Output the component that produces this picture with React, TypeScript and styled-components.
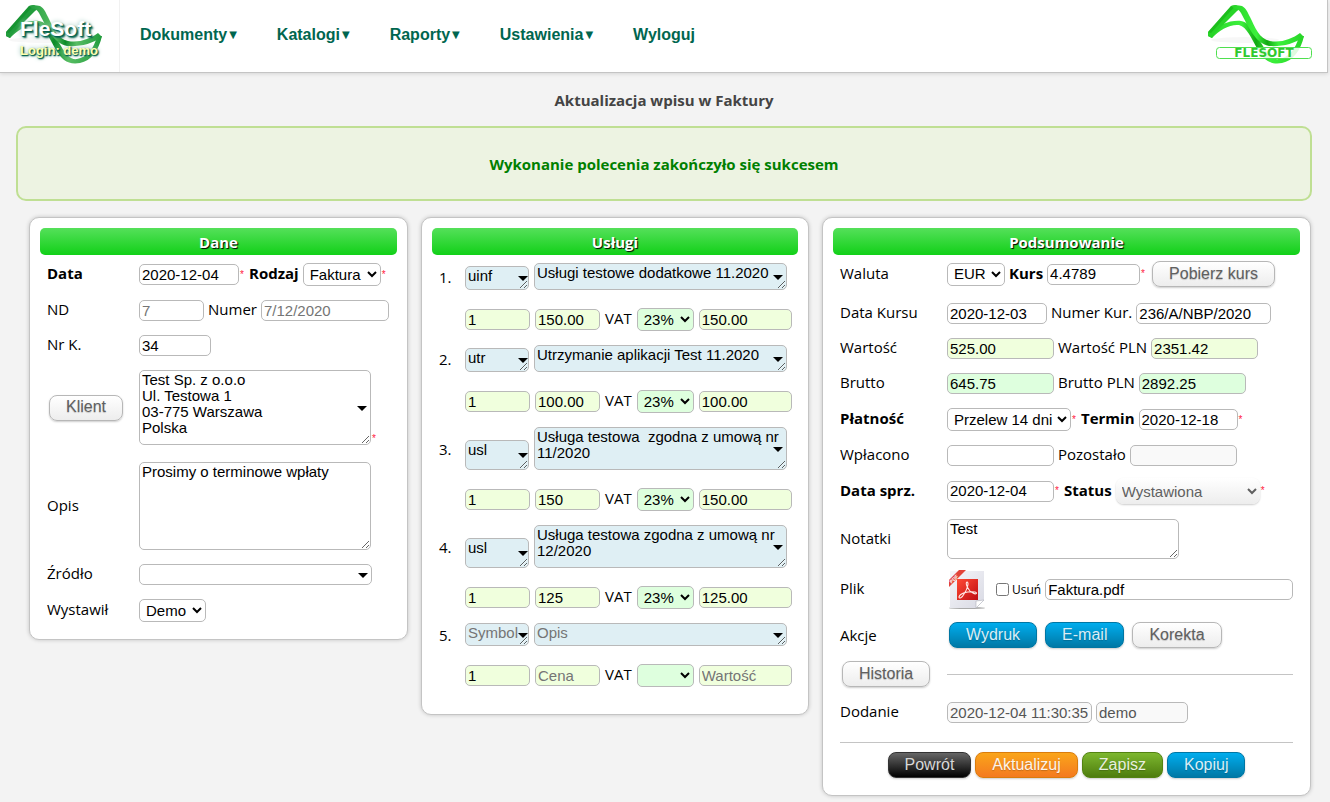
import React from "react";
import styled, { createGlobalStyle, css } from "styled-components";

const GlobalStyle = createGlobalStyle`
  * { box-sizing: border-box; }
  body {
    margin: 0;
    background: #f3f3f3;
    color: #000;
    font: 15px/20px "Open Sans", "Noto Sans", sans-serif;
  }
`;

const controlFont = `"Liberation Sans", Arial, sans-serif`;

const Page = styled.div`
  padding: 0 2px 6px 0;
`;

const Header = styled.header`
  display: flex;
  align-items: stretch;
  height: 73px;
  background: #fff;
  border-right: 1px solid #c4c4c4;
  border-bottom: 1px solid #c4c4c4;
  box-shadow: 0 1px 4px rgba(0, 0, 0, 0.12);
`;

const Account = styled.a`
  position: relative;
  display: block;
  width: 120px;
  padding: 19px 0 0 20px;
  border-right: 1px solid #f1f1f1;
  text-decoration: none;
  font-family: ${controlFont};
  font-weight: bold;
  svg {
    position: absolute;
    left: 4px;
    top: 3px;
  }
`;

const Brand = styled.span`
  position: relative;
  display: block;
  font-size: 21px;
  line-height: 20px;
  color: #fff;
  text-shadow: 1px 1px 1px #00604c, 2px 2px 2px #00604c, 0 0 5px #9fc9bf;
`;

const Login = styled.span`
  position: relative;
  display: block;
  margin-top: 4px;
  font-size: 13px;
  line-height: 16px;
  color: #ffffb0;
  text-shadow: 1px 1px 1px #00604c, 1px 1px 2px #00604c, 0 0 5px #8fc0b4;
`;

const Nav = styled.nav`
  display: flex;
  flex: 1;
  align-items: center;
  padding-bottom: 2px;
`;

const NavLink = styled.a`
  display: flex;
  align-items: center;
  gap: 2px;
  padding: 0 20px;
  color: #00664f;
  font: bold 16px/20px ${controlFont};
  text-decoration: none;
  small {
    font: 10px/20px "DejaVu Sans", sans-serif;
  }
`;

const Logo = styled.a`
  padding: 3px 13px 0 0;
`;

const Title = styled.h1`
  margin: 17px 0 16px;
  color: #444;
  font-size: 15px;
  line-height: 20px;
  text-align: center;
`;

const Notice = styled.p`
  margin: 0 16px;
  padding: 26px 0 25px;
  border: 2px solid #bfdf93;
  border-radius: 10px;
  background: #edf3e2;
  color: #008000;
  font-size: 15px;
  line-height: 20px;
  font-weight: bold;
  text-align: center;
`;

const Panels = styled.main`
  display: grid;
  grid-template-columns: minmax(0, 379fr) minmax(0, 388fr) minmax(0, 489fr);
  align-items: start;
  gap: 13px;
  padding: 16px 17px 0 29px;
`;

const Panel = styled.section<{ $bottom?: number }>`
  padding: 10px 10px ${(p) => p.$bottom ?? 10}px;
  border: 1px solid #c4c4c4;
  border-radius: 10px;
  background: #fff;
  box-shadow: 0 0 4px rgba(0, 0, 0, 0.2);
`;

const PanelTitle = styled.h2`
  margin: 0 0 1px;
  border-radius: 5px;
  background: linear-gradient(#55e05a, #11d018);
  color: #fff;
  font-size: 15px;
  line-height: 27px;
  text-align: center;
  text-shadow: 1px 1px 1px #000;
  padding-top: 1px;
  height: 27px;
`;

const Row = styled.div<{ $label: number; $buttons?: boolean; $top?: number; $bottom?: number }>`
  display: grid;
  grid-template-columns: ${(p) => p.$label}px 1fr;
  align-items: center;
  padding: ${(p) => p.$top ?? (p.$buttons ? 5 : 7)}px 7px ${(p) => p.$bottom ?? (p.$buttons ? 8 : 7)}px;
`;

const Fields = styled.div`
  display: flex;
  align-items: center;
  gap: 4px;
`;

const Label = styled.label<{ $bold?: boolean }>`
  padding-bottom: 2px;
  line-height: 19px;
  font-weight: ${(p) => (p.$bold ? "bold" : "normal")};
  white-space: nowrap;
`;

const Required = styled.span`
  display: flex;
  align-items: center;
  &::after {
    content: "*";
    width: 5px;
    padding-left: 1px;
    color: #ff2040;
    font: 10px/12px ${controlFont};
  }
`;

const RequiredArea = styled(Required)`
  align-items: flex-end;
`;

type Tone = "white" | "lime" | "mint" | "sky" | "muted";
const tones: Record<Tone, string> = {
  white: "#fff",
  lime: "#f0ffdd",
  mint: "#deffde",
  sky: "#dfeff4",
  muted: "#f9f9f9",
};

const control = css<{ $w?: number; $tone?: Tone }>`
  margin: 0;
  width: ${(p) => (p.$w ? `${p.$w}px` : "auto")};
  border: 1px solid #b9b9b9;
  border-radius: 5px;
  background-color: ${(p) => tones[p.$tone ?? "white"]};
  color: ${(p) => (p.$tone === "muted" ? "#555" : "#000")};
  font: 15px/16px ${controlFont};
  &::placeholder { color: #757575; }
`;

const Input = styled.input<{ $w?: number; $tone?: Tone; $grow?: boolean }>`
  ${control}
  height: 21px;
  padding: 0 2px 1px;
  ${(p) => p.$grow && "flex: 1; min-width: 0;"}
`;

const Select = styled.select<{ $w?: number; $tone?: Tone }>`
  ${control}
  height: 23px;
  padding: 0 0 1px 2px;
`;

const StatusSelect = styled.select`
  width: 144px;
  height: 26px;
  padding: 0 2px;
  border: 0;
  border-radius: 8px;
  background: linear-gradient(#fff, #ededed);
  box-shadow: 0 1px 2px rgba(0, 0, 0, 0.2);
  color: #606060;
  font: 15px/16px ${controlFont};
`;

const TextArea = styled.textarea<{ $w?: number; $h: number; $tone?: Tone }>`
  ${control}
  display: block;
  height: ${(p) => p.$h}px;
  padding: 1px 2px;
  overflow: hidden;
  resize: both;
`;

const Combo = styled.span<{ $right?: number }>`
  position: relative;
  display: block;
  ${Input} { display: block; }
  &::after {
    content: "";
    position: absolute;
    right: ${(p) => p.$right ?? 4}px;
    top: 50%;
    margin-top: -2px;
    border: 5px solid transparent;
    border-top-color: #000;
    border-bottom: 0;
    pointer-events: none;
  }
`;

type Look = "light" | "blue" | "black" | "orange" | "green";
const looks: Record<Look, [string, string, string, string]> = {
  light: ["#ffffff", "#ededed", "#b7b7b7", "#606060"],
  blue: ["#00adee", "#0078a5", "#0076a3", "#d9eef7"],
  black: ["#666666", "#000000", "#333333", "#d7d7d7"],
  orange: ["#faa51a", "#f47a20", "#da7c0c", "#fef4e9"],
  green: ["#7db72f", "#4e7d0e", "#538312", "#e8f0de"],
};

const Button = styled.button<{ $look?: Look }>`
  height: 26px;
  margin: 0 2px;
  padding: 0 16px 1px;
  border: 1px solid ${(p) => looks[p.$look ?? "light"][2]};
  border-radius: 8px;
  background: linear-gradient(${(p) => looks[p.$look ?? "light"][0]}, ${(p) => looks[p.$look ?? "light"][1]});
  box-shadow: 0 1px 2px rgba(0, 0, 0, 0.2);
  color: ${(p) => looks[p.$look ?? "light"][3]};
  font: 16px/20px ${controlFont};
  text-shadow: 0 1px 1px rgba(0, 0, 0, 0.2);
  white-space: nowrap;
  justify-self: start;
`;

const Rule = styled.hr`
  width: 100%;
  margin: 0;
  border: 0;
  border-top: 1px solid #c4c4c4;
`;

const Footer = styled.div`
  display: flex;
  justify-content: center;
  margin: 12px 7px 0;
  padding-top: 9px;
  border-top: 1px solid #c4c4c4;
`;

const ServiceList = styled.ol`
  margin: 0;
  padding: 0;
  list-style: none;
`;

const ServiceHead = styled.div`
  display: grid;
  grid-template-columns: 26px auto auto;
  justify-content: start;
  align-items: end;
  column-gap: 5px;
  padding: 7px 0 11px 7px;
  > span:first-child { align-self: center; }
  > span:nth-child(2) { margin-left: -5px; }
`;

const ServiceBody = styled.div`
  display: flex;
  align-items: center;
  gap: 5px;
  padding: 7px 0 7px 33px;
`;

const FileLink = styled.a`
  display: block;
  width: 39px;
  height: 39px;
  margin-right: 6px;
`;

const Check = styled.label`
  display: flex;
  align-items: center;
  gap: 3px;
  font-size: 12px;
  input {
    width: 13px;
    height: 13px;
    margin: 0;
  }
`;

function Ribbon({ dark, mid, light, children, width }: {
  dark: string; mid: string; light: string; children?: React.ReactNode; width: number;
}) {
  const id = "ribbon" + light.slice(1);
  return (
    <svg width={width} height="66" viewBox={`6 3 ${width} 66`} fill="none" aria-hidden="true">
      <defs>
        <linearGradient id={id} x1="0" x2="1" y1="0" y2="0">
          <stop offset="0" stopColor={mid} />
          <stop offset="0.35" stopColor={light} />
          <stop offset="0.5" stopColor={dark} />
          <stop offset="0.65" stopColor={light} />
          <stop offset="1" stopColor={mid} />
        </linearGradient>
      </defs>
      <ellipse cx="45" cy="40" rx="34" ry="3" fill="#000" opacity="0.03" />
      <path d="M9 33C18 25 30 20 41 21C52 23 57 36 63 46C68 55 73 60 79 59C89 57 96 49 99 36L104 36C101 50 93 61 82 63C70 65 64 60 58 50C51 38 47 27 39 25C30 24 19 30 12 38L8 36Z" fill={`url(#${id})`} />
      <path d="M8 32L31 6L36 5L41 8L37 11L14 34L12 38L8 36Z" fill={mid} />
      <path d="M8 32L31 6L36 5L11 33Z" fill={dark} opacity="0.5" />
      <path d="M31 6C34 5 38 5 42 6C46 8 48 13 50 17C55 27 59 39 70 41C81 43 92 39 100 33L104 37C94 44 81 47 69 46C55 43 48 26 41 13C39 10 37 8 35 9Z" fill={`url(#${id})`} />
      {children}
    </svg>
  );
}

function PdfIcon() {
  return (
    <svg width="39" height="39" viewBox="0 0 39 39" aria-hidden="true">
      <defs>
        <linearGradient id="paper" x1="0" y1="0" x2="1" y2="1">
          <stop offset="0" stopColor="#f6f6fa" />
          <stop offset="1" stopColor="#d8d9e3" />
        </linearGradient>
        <linearGradient id="tile" x1="0" y1="0" x2="1" y2="1">
          <stop offset="0" stopColor="#ff4b35" />
          <stop offset="1" stopColor="#bf0d12" />
        </linearGradient>
      </defs>
      <ellipse cx="20" cy="38" rx="18" ry="1" fill="#aaa" />
      <path d="M3 1H37V30L29 38H3Z" fill="url(#paper)" />
      <path d="M29 38V31L37 30Z" fill="#fff" stroke="#aeb0bb" strokeWidth="0.6" />
      <rect x="10" y="9" width="21" height="21" fill="url(#tile)" />
      <path d="M12 27C13 23 21 21 28 22C31 23 29 25 26 23C21 21 18 13 20 12C22 12 21 18 17 24C15 28 12 29 12 27Z" fill="none" stroke="#ffe9e5" strokeWidth="1.1" />
      <path d="M2 10L12 0H19L2 17Z" fill="#e2433a" />
      <text x="3" y="12" transform="rotate(-43 6 11)" fill="#fff" fontSize="5" fontWeight="bold" fontFamily="Liberation Sans, sans-serif">PDF</text>
    </svg>
  );
}

const menu = ["Dokumenty", "Katalogi", "Raporty", "Ustawienia"];

const services = [
  { symbol: "uinf", text: "Usługi testowe dodatkowe 11.2020", price: "150.00", value: "150.00", symbolH: 24, textH: 27 },
  { symbol: "utr", text: "Utrzymanie aplikacji Test 11.2020", price: "100.00", value: "100.00", symbolH: 24, textH: 27 },
  { symbol: "usl", text: "Usługa testowa  zgodna z umową nr 11/2020", price: "150", value: "150.00", symbolH: 30, textH: 43 },
  { symbol: "usl", text: "Usługa testowa zgodna z umową nr 12/2020", price: "125", value: "125.00", symbolH: 30, textH: 43 },
  { symbol: "", text: "", price: "", value: "", symbolH: 23, textH: 23 },
];

function Service({ item, no }: { item: (typeof services)[number]; no: number }) {
  return (
    <li>
      <ServiceHead>
        <span>{no}.</span>
        <Combo $right={1}>
          <TextArea aria-label="Symbol" placeholder="Symbol" defaultValue={item.symbol} $w={64} $h={item.symbolH} $tone="sky" />
        </Combo>
        <Combo>
          <TextArea aria-label="Opis usługi" placeholder="Opis" defaultValue={item.text} $w={253} $h={item.textH} $tone="sky" />
        </Combo>
      </ServiceHead>
      <ServiceBody>
        <Input aria-label="Ilość" defaultValue="1" $w={65} $tone="lime" />
        <Input aria-label="Cena" placeholder="Cena" defaultValue={item.price} $w={65} $tone="lime" />
        <Label htmlFor={`vat${no}`}>VAT</Label>
        <Select id={`vat${no}`} $w={57} $tone="mint">
          <option>{item.price ? "23%" : ""}</option>
        </Select>
        <Input aria-label="Wartość usługi" placeholder="Wartość" defaultValue={item.value} $w={93} $tone="lime" />
      </ServiceBody>
    </li>
  );
}

export default function App() {
  return (
    <Page>
      <GlobalStyle />
      <Header>
        <Account href="#">
          <Ribbon width={100} dark="#0b8a26" mid="#219c3c" light="#57bd63" />
          <Brand>FleSoft</Brand>
          <Login>Login: demo</Login>
        </Account>
        <Nav>
          {menu.map((name) => (
            <NavLink href="#" key={name}>
              {name}
              <small>▼</small>
            </NavLink>
          ))}
          <NavLink href="#">Wyloguj</NavLink>
        </Nav>
        <Logo href="#" aria-label="FleSoft">
          <Ribbon width={108} dark="#12a812" mid="#27d427" light="#3cf03c">
            <rect x="16.5" y="47.5" width="95" height="11" rx="3" fill="#fff" fillOpacity="0.85" stroke="#4fe04f" />
            <text x="64" y="57" textAnchor="middle" fill="#2fc92f" fontSize="12" fontWeight="bold" fontFamily="DejaVu Sans, sans-serif">FLESOFT</text>
          </Ribbon>
        </Logo>
      </Header>

      <Title>Aktualizacja wpisu w Faktury</Title>
      <Notice role="status">Wykonanie polecenia zakończyło się sukcesem</Notice>

      <Panels>
        <Panel>
          <PanelTitle>Dane</PanelTitle>
          <Row $label={92}>
            <Label $bold htmlFor="data">Data</Label>
            <Fields>
              <Required><Input id="data" defaultValue="2020-12-04" $w={100} /></Required>
              <Label $bold htmlFor="rodzaj">Rodzaj</Label>
              <Required><Select id="rodzaj" $w={78}><option>Faktura</option></Select></Required>
            </Fields>
          </Row>
          <Row $label={92}>
            <Label htmlFor="nd">ND</Label>
            <Fields>
              <Input id="nd" placeholder="7" $w={65} />
              <Label htmlFor="numer">Numer</Label>
              <Input id="numer" placeholder="7/12/2020" $w={128} />
            </Fields>
          </Row>
          <Row $label={92}>
            <Label htmlFor="nrk">Nr K.</Label>
            <Fields><Input id="nrk" defaultValue="34" $w={72} /></Fields>
          </Row>
          <Row $label={92} $bottom={10}>
            <Button type="button">Klient</Button>
            <Fields>
              <RequiredArea>
                <Combo>
                  <TextArea aria-label="Klient" defaultValue={"Test Sp. z o.o.o\nUl. Testowa 1\n03-775 Warszawa\nPolska"} $w={232} $h={75} />
                </Combo>
              </RequiredArea>
            </Fields>
          </Row>
          <Row $label={92}>
            <Label htmlFor="opis">Opis</Label>
            <TextArea id="opis" defaultValue="Prosimy o terminowe wpłaty" $w={232} $h={88} />
          </Row>
          <Row $label={92}>
            <Label htmlFor="zrodlo">Źródło</Label>
            <Fields><Combo><Input id="zrodlo" $w={233} /></Combo></Fields>
          </Row>
          <Row $label={92}>
            <Label htmlFor="wystawil">Wystawił</Label>
            <Fields><Select id="wystawil" $w={67}><option>Demo</option></Select></Fields>
          </Row>
        </Panel>

        <Panel $bottom={20}>
          <PanelTitle>Usługi</PanelTitle>
          <ServiceList>
            {services.map((item, i) => <Service key={i} item={item} no={i + 1} />)}
          </ServiceList>
        </Panel>

        <Panel $bottom={17}>
          <PanelTitle>Podsumowanie</PanelTitle>
          <Row $label={107} $buttons $bottom={9}>
            <Label htmlFor="waluta">Waluta</Label>
            <Fields>
              <Select id="waluta" $w={58}><option>EUR</option></Select>
              <Label $bold htmlFor="kurs">Kurs</Label>
              <Required><Input id="kurs" defaultValue="4.4789" $w={93} /></Required>
              <Button type="button">Pobierz kurs</Button>
            </Fields>
          </Row>
          <Row $label={107}>
            <Label htmlFor="datakursu">Data Kursu</Label>
            <Fields>
              <Input id="datakursu" defaultValue="2020-12-03" $w={100} />
              <Label htmlFor="numerkur">Numer Kur.</Label>
              <Input id="numerkur" defaultValue="236/A/NBP/2020" $w={135} />
            </Fields>
          </Row>
          <Row $label={107}>
            <Label htmlFor="wartosc">Wartość</Label>
            <Fields>
              <Input id="wartosc" defaultValue="525.00" $w={107} $tone="lime" />
              <Label htmlFor="wartoscpln">Wartość PLN</Label>
              <Input id="wartoscpln" defaultValue="2351.42" $w={107} $tone="lime" />
            </Fields>
          </Row>
          <Row $label={107}>
            <Label htmlFor="brutto">Brutto</Label>
            <Fields>
              <Input id="brutto" defaultValue="645.75" $w={107} $tone="mint" />
              <Label htmlFor="bruttopln">Brutto PLN</Label>
              <Input id="bruttopln" defaultValue="2892.25" $w={107} $tone="mint" />
            </Fields>
          </Row>
          <Row $label={107}>
            <Label $bold htmlFor="platnosc">Płatność</Label>
            <Fields>
              <Required><Select id="platnosc" $w={124}><option>Przelew 14 dni</option></Select></Required>
              <Label $bold htmlFor="termin">Termin</Label>
              <Required><Input id="termin" defaultValue="2020-12-18" $w={99} /></Required>
            </Fields>
          </Row>
          <Row $label={107}>
            <Label htmlFor="wplacono">Wpłacono</Label>
            <Fields>
              <Input id="wplacono" $w={107} />
              <Label htmlFor="pozostalo">Pozostało</Label>
              <Input id="pozostalo" readOnly $w={107} $tone="muted" />
            </Fields>
          </Row>
          <Row $label={107} $buttons>
            <Label $bold htmlFor="datasprz">Data sprz.</Label>
            <Fields>
              <Required><Input id="datasprz" defaultValue="2020-12-04" $w={107} /></Required>
              <Label $bold htmlFor="status">Status</Label>
              <Required><StatusSelect id="status"><option>Wystawiona</option></StatusSelect></Required>
            </Fields>
          </Row>
          <Row $label={107}>
            <Label htmlFor="notatki">Notatki</Label>
            <TextArea id="notatki" defaultValue="Test" $w={232} $h={40} />
          </Row>
          <Row $label={107} $top={4} $bottom={8}>
            <Label htmlFor="plik">Plik</Label>
            <Fields>
              <FileLink href="#" aria-label="Faktura.pdf"><PdfIcon /></FileLink>
              <Check><input type="checkbox" />Usuń</Check>
              <Input id="plik" defaultValue="Faktura.pdf" $grow />
            </Fields>
          </Row>
          <Row $label={107} $buttons>
            <span>Akcje</span>
            <Fields>
              <Button type="button" $look="blue">Wydruk</Button>
              <Button type="button" $look="blue">E-mail</Button>
              <Button type="button">Korekta</Button>
            </Fields>
          </Row>
          <Row $label={107} $buttons>
            <Button type="button">Historia</Button>
            <Rule />
          </Row>
          <Row $label={107}>
            <Label htmlFor="dodanie">Dodanie</Label>
            <Fields>
              <Input id="dodanie" readOnly defaultValue="2020-12-04 11:30:35" $w={145} $tone="muted" />
              <Input aria-label="Dodał" readOnly defaultValue="demo" $w={92} $tone="muted" />
            </Fields>
          </Row>
          <Footer>
            <Button type="button" $look="black">Powrót</Button>
            <Button type="button" $look="orange">Aktualizuj</Button>
            <Button type="submit" $look="green">Zapisz</Button>
            <Button type="button" $look="blue">Kopiuj</Button>
          </Footer>
        </Panel>
      </Panels>
    </Page>
  );
}
